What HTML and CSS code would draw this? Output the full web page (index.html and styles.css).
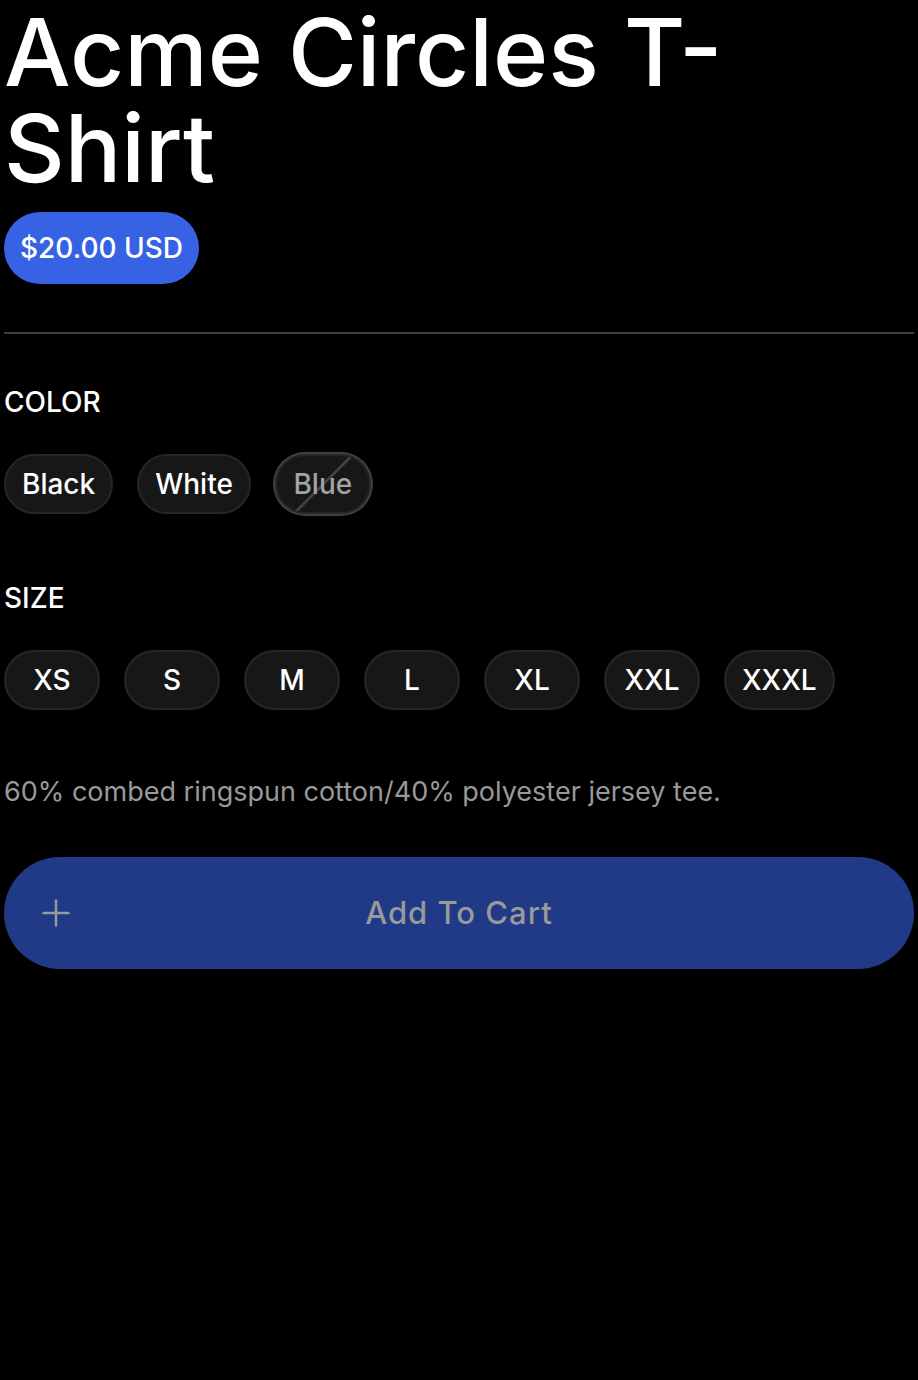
FILE: index.html
```html
<!DOCTYPE html>
<html lang="en">
<head>
<meta charset="utf-8">
<meta name="viewport" content="width=device-width, initial-scale=1">
<title>Acme Circles T-Shirt</title>
<link rel="stylesheet" href="styles.css">
</head>
<body>
<main class="product">
  <header class="summary">
    <h1 class="title">Acme Circles T-Shirt</h1>
    <p class="price">$20.00 USD</p>
  </header>
  <form class="form">
    <section class="group" aria-labelledby="color-label">
      <h2 class="label" id="color-label">COLOR</h2>
      <div class="options">
        <button type="button" class="option">Black</button>
        <button type="button" class="option">White</button>
        <button type="button" class="option option-unavailable" disabled>Blue</button>
      </div>
    </section>
    <section class="group" aria-labelledby="size-label">
      <h2 class="label" id="size-label">SIZE</h2>
      <div class="options">
        <button type="button" class="option">XS</button>
        <button type="button" class="option">S</button>
        <button type="button" class="option">M</button>
        <button type="button" class="option">L</button>
        <button type="button" class="option">XL</button>
        <button type="button" class="option">XXL</button>
        <button type="button" class="option">XXXL</button>
      </div>
    </section>
    <p class="description">60% combed ringspun cotton/40% polyester jersey tee.</p>
    <button type="submit" class="add" disabled>
      <svg class="plus" viewBox="0 0 24 24" fill="none" stroke="currentColor" stroke-width="1.5" stroke-linecap="round" aria-hidden="true"><path d="M12 4.500v15m7.500-7.500h-15"/></svg>
      Add To Cart
    </button>
  </form>
</main>
</body>
</html>
```
FILE: styles.css
```css
* { box-sizing: border-box; }
body {
  margin: 0;
  background: #000;
  color: #fff;
  font-family: Inter, "Liberation Sans", sans-serif;
  font-size: 28px;
  font-weight: 500;
  line-height: 40px;
}
h1, h2, p { margin: 0; }
button { font: inherit; color: inherit; }
.product { padding: 4px; }
.summary {
  display: flex;
  flex-direction: column;
  align-items: flex-start;
  gap: 16px;
  padding-bottom: 48px;
  border-bottom: 2px solid #404040;
}
.title {
  font-size: 94px;
  line-height: 96px;
  font-weight: 500;
}
.price {
  padding: 16px;
  border-radius: 36px;
  background: #3762e3;
}
.form {
  display: flex;
  flex-direction: column;
  padding-top: 48px;
}
.group { margin-bottom: 64px; }
.label {
  margin-bottom: 32px;
  font-size: 28px;
  font-weight: inherit;
}
.options {
  display: flex;
  flex-wrap: wrap;
  gap: 24px;
}
.option {
  min-width: 96px;
  height: 60px;
  padding: 0 16px;
  border: 2px solid #262626;
  border-radius: 30px;
  background: #171717;
}
.option-unavailable {
  background: linear-gradient(135deg, transparent calc(50% - 1px), #404040 calc(50% - 1px), #404040 calc(50% + 2px), transparent calc(50% + 2px)) #171717;
  color: #a3a3a3;
  box-shadow: 0 0 0 2px #404040;
}
.description {
  margin-bottom: 48px;
  color: #999;
  font-size: 27px;
  font-weight: 400;
  line-height: 35px;
}
.add {
  position: relative;
  padding: 32px;
  border: 0;
  border-radius: 56px;
  background: #203a87;
  color: #999;
  font-size: 31px;
  line-height: 48px;
  letter-spacing: 1px;
}
.plus {
  position: absolute;
  left: 32px;
  top: 36px;
  width: 40px;
  height: 40px;
}
```
